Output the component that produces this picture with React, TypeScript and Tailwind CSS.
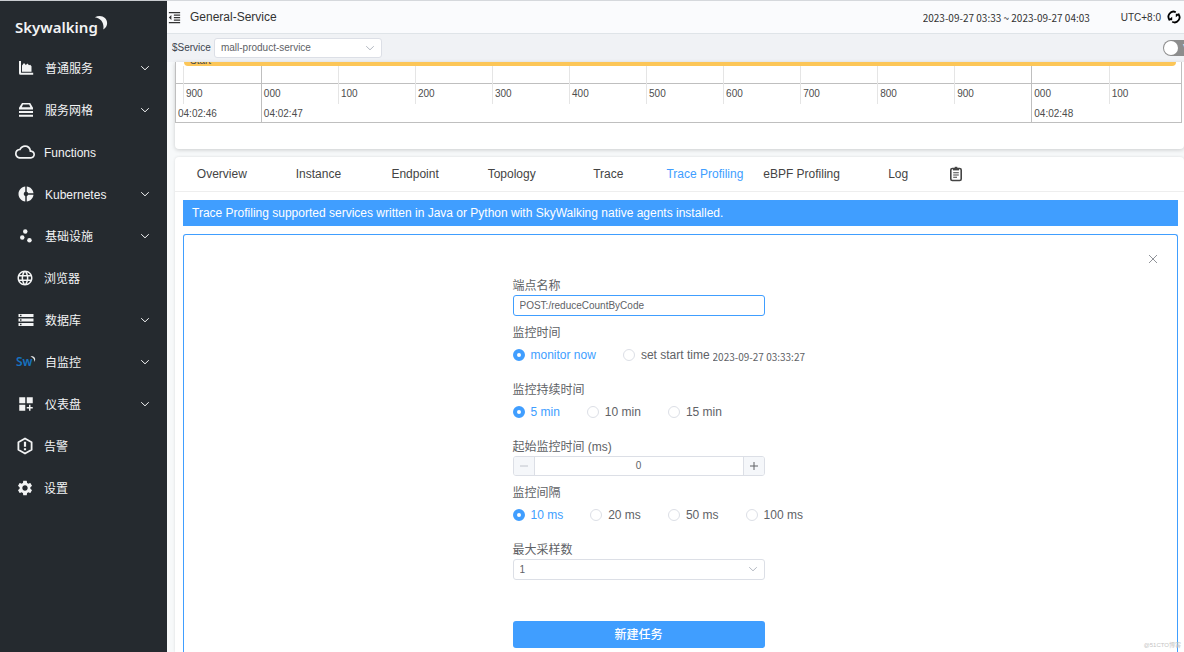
import { clsx } from 'clsx'
import { ReactNode, useState } from 'react'
import {
  MdDashboardCustomize,
  MdDonutSmall,
  MdFormatIndentDecrease,
  MdLanguage,
  MdOutlineCloudQueue,
  MdScatterPlot,
  MdSettings,
  MdStorage,
} from 'react-icons/md'

const DATE_FONT = "font-['Noto_Sans_CJK_SC','Noto_Sans',sans-serif]"

function ChevronDown({ className }: { className?: string }) {
  return (
    <svg
      viewBox="0 0 10 10"
      fill="none"
      stroke="currentColor"
      strokeWidth="1"
      strokeLinecap="round"
      strokeLinejoin="round"
      className={className}
    >
      <path d="M1.500 3.500l3.500 3.300 3.500-3.300" />
    </svg>
  )
}

function AreaChartIcon() {
  return (
    <svg viewBox="0 0 16 16" fill="currentColor" className="size-4">
      <path d="M1 1h2v11.800h12.200v2H2.500A1.500 1.500 0 0 1 1 13.300z" />
      <path d="M4 11.800V5.500L6 3l1.800 2 1.700-1.500L11 5.300l1.200-.6 1.300 1.500v5.600z" />
    </svg>
  )
}

function MeshIcon() {
  return (
    <svg viewBox="0 0 16 16" fill="currentColor" className="size-4">
      <path
        fillRule="evenodd"
        d="M4 1h8.200l2.800 4.800v1.700H1V5.800zM5 2.600L3.800 5.300h8.500L11.200 2.600z"
      />
      <path d="M1 9h14v2H1zM1 12.700h14v2H1z" />
    </svg>
  )
}

function AlarmIcon() {
  return (
    <svg
      viewBox="0 0 18 18"
      fill="none"
      stroke="currentColor"
      strokeWidth="1.800"
      strokeLinejoin="round"
      className="size-[18px]"
    >
      <path d="M9 1.500l6.600 3.700v7.600L9 16.500l-6.600-3.700V5.200z" />
      <path d="M9 4.800v5M9 11.200v2" strokeWidth="2.200" />
    </svg>
  )
}

function SelfIcon() {
  return (
    <svg viewBox="0 0 20 18" className="h-[18px] w-5 shrink-0 overflow-visible">
      <text
        x="0"
        y="13"
        fill="#1672c0"
        fontSize="12"
        fontWeight="600"
        fontFamily="Noto Sans, sans-serif"
      >
        Sw
      </text>
      <path d="M14.500 3.500c3.500-1 6 2 4 5.500 0-2.500-1-4.500-4-5.500z" fill="#e8eaec" />
    </svg>
  )
}

function ReloadIcon() {
  return (
    <svg
      viewBox="0 0 14 14"
      fill="none"
      stroke="currentColor"
      strokeWidth="1.800"
      className="size-[14px]"
    >
      <path d="M3 10.200A5 5 0 0 1 8.800 2.200M11 3.800A5 5 0 0 1 5.200 11.800" />
      <path d="M.8 10.200h4.400V6.800zM13.200 3.800H8.800v3.400z" fill="currentColor" stroke="none" />
    </svg>
  )
}

function ClipboardIcon() {
  return (
    <svg
      viewBox="0 0 14 16"
      fill="none"
      stroke="currentColor"
      strokeWidth="1.600"
      className="h-4 w-[14px]"
    >
      <rect x="1.800" y="2.500" width="10.400" height="12" rx="1.600" />
      <path d="M4 3.200h6" strokeWidth="2.400" />
      <path d="M7 .8v2" strokeWidth="2.600" />
      <path d="M4.200 6.800h5.600M4.200 9h5.600M4.200 11.200h3.800" strokeWidth="1.100" />
    </svg>
  )
}

interface MenuItem {
  label: string
  icon: ReactNode
  expandable?: boolean
}

const MENU: MenuItem[] = [
  { label: '普通服务', icon: <AreaChartIcon />, expandable: true },
  { label: '服务网格', icon: <MeshIcon />, expandable: true },
  { label: 'Functions', icon: <MdOutlineCloudQueue className="size-5 shrink-0" /> },
  { label: 'Kubernetes', icon: <MdDonutSmall className="size-[18px]" />, expandable: true },
  { label: '基础设施', icon: <MdScatterPlot className="size-[18px]" />, expandable: true },
  { label: '浏览器', icon: <MdLanguage className="size-[18px]" /> },
  { label: '数据库', icon: <MdStorage className="size-[18px]" />, expandable: true },
  { label: '自监控', icon: <SelfIcon />, expandable: true },
  {
    label: '仪表盘',
    icon: <MdDashboardCustomize className="size-[18px]" />,
    expandable: true,
  },
  { label: '告警', icon: <AlarmIcon /> },
  { label: '设置', icon: <MdSettings className="size-[18px]" /> },
]

function Sidebar() {
  return (
    <aside className="w-[167px] shrink-0 border-t border-[#c9ccd0] bg-[#252a2f] text-[#f2f3f4]">
      <div className="flex h-[46px] items-start pt-[13px] pl-[15px]">
        <span className="pt-px font-['Noto_Sans',sans-serif] text-[15px] leading-6 font-semibold">
          Skywalking
        </span>
        <svg viewBox="0 0 16 18" fill="currentColor" className="-ml-1 h-[18px] w-[14px]">
          <path d="M1 2.500C8-1.500 15 3 15 9c0 3-1.500 6-4.500 7.500C12 10 8.500 3.500 1 2.500z" />
        </svg>
      </div>
      <nav className="flex flex-col">
        {MENU.map((item) =>
          item.expandable ? (
            <button
              key={item.label}
              type="button"
              className="flex h-[42px] w-full cursor-pointer items-center gap-[10px] px-[17px] text-xs"
            >
              <span className="flex w-[18px] justify-center">{item.icon}</span>
              <span className="pt-px">{item.label}</span>
              <ChevronDown className="ml-auto size-[10px]" />
            </button>
          ) : (
            <a
              key={item.label}
              href="#"
              className="flex h-[42px] items-center gap-[10px] px-4 text-xs"
            >
              <span className="flex w-[18px] justify-center">{item.icon}</span>
              <span className="pt-px">{item.label}</span>
            </a>
          )
        )}
      </nav>
    </aside>
  )
}

function Header() {
  return (
    <header className="flex h-[33px] shrink-0 items-center border-t border-[#d5d8dc] bg-[#fafbfd] pr-[3px] text-[#333]">
      <button type="button" aria-label="collapse menu" className="cursor-pointer">
        <MdFormatIndentDecrease className="size-[15px]" />
      </button>
      <h1 className="ml-2 text-xs">General-Service</h1>
      <input
        aria-label="time range"
        readOnly
        defaultValue="2023-09-27 03:33 ~ 2023-09-27 04:03"
        className={clsx(DATE_FONT, 'ml-auto w-[198px] text-[10px] outline-none')}
      />
      <span className="text-[10px]">UTC+8:0</span>
      <button type="button" aria-label="reload" className="ml-1.5 cursor-pointer text-black">
        <ReloadIcon />
      </button>
    </header>
  )
}

function Toolbar() {
  const [viewMode, setViewMode] = useState(false)

  return (
    <div className="flex h-[29px] shrink-0 items-center overflow-hidden border-t border-[#dfe4e8] bg-[#f0f2f5] pb-px pl-[5px] text-[10px]">
      <label htmlFor="service" className="text-[#3d444f]">
        $Service
      </label>
      <div className="relative ml-[3px]">
        <select
          id="service"
          className="block h-5 w-[168px] appearance-none rounded-[3px] border border-[#dcdfe6] bg-white px-[6px] text-[#606266] outline-none"
        >
          <option>mall-product-service</option>
        </select>
        <ChevronDown className="pointer-events-none absolute top-[5px] right-[7px] size-[10px] text-[#b4b9c2]" />
      </div>
      <label className="-mr-5 ml-auto flex h-4 w-[41px] shrink-0 cursor-pointer items-center gap-[5px] rounded-full bg-[#8d8d8d] px-px text-[9px] text-white">
        <input
          type="checkbox"
          role="switch"
          checked={viewMode}
          onChange={(e) => setViewMode(e.target.checked)}
          className="size-[14px] shrink-0 appearance-none rounded-full bg-white"
        />
        V
      </label>
    </div>
  )
}

const TIMELINE = [
  { time: '04:02:46', lead: true, ticks: ['900'], size: 'grow-[85]' },
  {
    time: '04:02:47',
    ticks: ['000', '100', '200', '300', '400', '500', '600', '700', '800', '900'],
    size: 'grow-[771]',
  },
  { time: '04:02:48', partial: true, ticks: ['000', '100'], size: 'grow-[149]' },
]

function Timeline() {
  return (
    <section className="rounded-b bg-white pr-[2px] pb-[26px] text-[10px] text-[#4d4d4d] shadow-[0_1px_4px_rgba(0,0,0,0.18)]">
      <div className="border-x border-b border-[#bfbfbf]">
        <div className="mr-[5px] ml-2 flex h-1 items-end overflow-hidden rounded-b-sm bg-[#fcc658] pl-1.5 leading-[10px]">
          Start
        </div>
        <div className="flex">
          {TIMELINE.map((group, index) => (
            <div
              key={group.time}
              className={clsx('basis-0', group.size, index > 0 && 'border-l border-[#bfbfbf]')}
            >
              <div className="flex">
                {group.lead && <div className="h-[18px] w-[7px] border-b border-[#bfbfbf]" />}
                {group.ticks.map((tick, i) => (
                  <div
                    key={tick}
                    className={clsx(
                      'basis-0',
                      group.partial && i > 0 ? 'grow-[72]' : 'grow-[77]',
                      (i > 0 || group.lead) && 'border-l border-[#e5e5e5]'
                    )}
                  >
                    <div className="h-[18px] border-b border-[#bfbfbf]" />
                    <div className="h-5 pl-[2px] leading-5">{tick}</div>
                  </div>
                ))}
              </div>
              <div className="h-[18px] pl-[2px] leading-5">{group.time}</div>
            </div>
          ))}
        </div>
      </div>
    </section>
  )
}

const TABS = [
  'Overview',
  'Instance',
  'Endpoint',
  'Topology',
  'Trace',
  'Trace Profiling',
  'eBPF Profiling',
  'Log',
]

function Tabs() {
  const [active, setActive] = useState('Trace Profiling')

  return (
    <div className="flex h-[35px] items-center border-b border-[#eee] pl-[2px] text-xs">
      <div className="grid w-[766px] grid-cols-8 gap-[7px]">
        {TABS.map((tab) => (
          <button
            key={tab}
            type="button"
            onClick={() => setActive(tab)}
            className={clsx(
              'cursor-pointer whitespace-nowrap',
              tab === active ? 'text-[#409eff]' : 'text-[#444]'
            )}
          >
            {tab}
          </button>
        ))}
      </div>
      <button type="button" aria-label="copy" className="ml-1.5 cursor-pointer text-[#444]">
        <ClipboardIcon />
      </button>
    </div>
  )
}

interface RadioGroupProps {
  legend: string
  name: string
  options: string[]
  children?: ReactNode
}

function RadioGroup({ legend, name, options, children }: RadioGroupProps) {
  const [value, setValue] = useState(options[0])

  return (
    <fieldset className="mb-[13px]">
      <legend className="h-[18px] leading-[18px]">{legend}</legend>
      <div className="flex h-[26px] items-center">
        <div className="flex gap-[27px]">
          {options.map((option) => (
            <label
              key={option}
              className={clsx(
                'flex cursor-pointer items-center gap-[6px] whitespace-nowrap',
                value === option && 'text-[#409eff]'
              )}
            >
              <input
                type="radio"
                name={name}
                checked={value === option}
                onChange={() => setValue(option)}
                className="size-3 appearance-none rounded-full border border-[#dcdfe6] bg-white checked:border-4 checked:border-[#409eff]"
              />
              {option}
            </label>
          ))}
        </div>
        {children}
      </div>
    </fieldset>
  )
}

function TaskForm() {
  const [startMs, setStartMs] = useState(0)

  return (
    <form
      className="mx-auto w-[336px] pt-3 text-xs text-[#606266]"
      onSubmit={(e) => e.preventDefault()}
    >
      <label htmlFor="endpoint" className="block h-[18px] leading-[18px]">
        端点名称
      </label>
      <input
        id="endpoint"
        defaultValue="POST:/reduceCountByCode"
        className="mb-2 block h-[21px] w-3/4 rounded-[3px] border border-[#409eff] px-[6px] text-[10px] outline-none"
      />
      <RadioGroup legend="监控时间" name="monitor-time" options={['monitor now', 'set start time']}>
        <input
          aria-label="start time"
          readOnly
          defaultValue="2023-09-27 03:33:27"
          className={clsx(DATE_FONT, 'ml-[3px] w-[110px] pt-1 text-[10px] outline-none')}
        />
      </RadioGroup>
      <RadioGroup legend="监控持续时间" name="duration" options={['5 min', '10 min', '15 min']} />
      <label htmlFor="start-ms" className="block h-[18px] leading-[18px]">
        起始监控时间 (ms)
      </label>
      <div className="mb-2 flex h-5 w-3/4 overflow-hidden rounded-[3px] border border-[#dcdfe6]">
        <button
          type="button"
          aria-label="decrease"
          disabled={startMs === 0}
          onClick={() => setStartMs(startMs - 1)}
          className="flex w-[21px] items-center justify-center border-r border-[#dcdfe6] bg-[#f5f7fa] disabled:text-[#c0c4cc]"
        >
          <svg viewBox="0 0 8 8" stroke="currentColor" className="size-2">
            <path d="M0 4h8" />
          </svg>
        </button>
        <input
          id="start-ms"
          inputMode="numeric"
          value={startMs}
          onChange={(e) => setStartMs(Number(e.target.value) || 0)}
          className="min-w-0 flex-1 text-center text-[10px] outline-none"
        />
        <button
          type="button"
          aria-label="increase"
          onClick={() => setStartMs(startMs + 1)}
          className="flex w-[21px] cursor-pointer items-center justify-center border-l border-[#dcdfe6] bg-[#f5f7fa]"
        >
          <svg viewBox="0 0 8 8" stroke="currentColor" className="size-2">
            <path d="M0 4h8M4 0v8" />
          </svg>
        </button>
      </div>
      <RadioGroup
        legend="监控间隔"
        name="interval"
        options={['10 ms', '20 ms', '50 ms', '100 ms']}
      />
      <label htmlFor="max-samples" className="block h-[18px] leading-[18px]">
        最大采样数
      </label>
      <div className="relative w-3/4">
        <select
          id="max-samples"
          className="block h-[21px] w-full appearance-none rounded-[3px] border border-[#dcdfe6] bg-white px-[6px] text-[10px] outline-none"
        >
          <option>1</option>
        </select>
        <ChevronDown className="pointer-events-none absolute top-[5px] right-[7px] size-[10px] text-[#b4b9c2]" />
      </div>
      <button
        type="submit"
        className="mt-[41px] block h-[27px] w-3/4 cursor-pointer rounded-[3px] bg-[#409eff] font-medium text-white"
      >
        新建任务
      </button>
    </form>
  )
}

function ProfilingPanel() {
  return (
    <section className="mt-2 flex grow flex-col rounded-t bg-white shadow-[0_0_3px_rgba(0,0,0,0.12)]">
      <Tabs />
      <div className="flex grow flex-col pt-2 pr-[6px] pl-2">
        <p className="h-[26px] bg-[#409eff] pl-[9px] text-xs leading-[26px] text-white">
          Trace Profiling supported services written in Java or Python with SkyWalking native agents
          installed.
        </p>
        <div className="mt-2 grow rounded-t-[3px] border border-b-0 border-[#409eff]">
          <div className="flex justify-end pt-[18px] pr-[18px]">
            <button type="button" aria-label="close" className="cursor-pointer text-[#909399]">
              <svg viewBox="0 0 12 12" stroke="currentColor" className="size-3">
                <path d="M2 2l8 8M10 2l-8 8" />
              </svg>
            </button>
          </div>
          <TaskForm />
        </div>
      </div>
    </section>
  )
}

export default function App() {
  return (
    <div className="relative flex h-screen overflow-hidden font-['Liberation_Sans','Noto_Sans_CJK_SC',sans-serif]">
      <Sidebar />
      <main className="flex min-w-0 flex-1 flex-col bg-[#f7f9fa]">
        <Header />
        <Toolbar />
        <div className="flex grow flex-col pl-2">
          <Timeline />
          <ProfilingPanel />
        </div>
      </main>
      <span className="absolute right-[3px] bottom-[3px] text-[6px] leading-[8px] text-[#c4c4c4]">
        @51CTO博客
      </span>
    </div>
  )
}
